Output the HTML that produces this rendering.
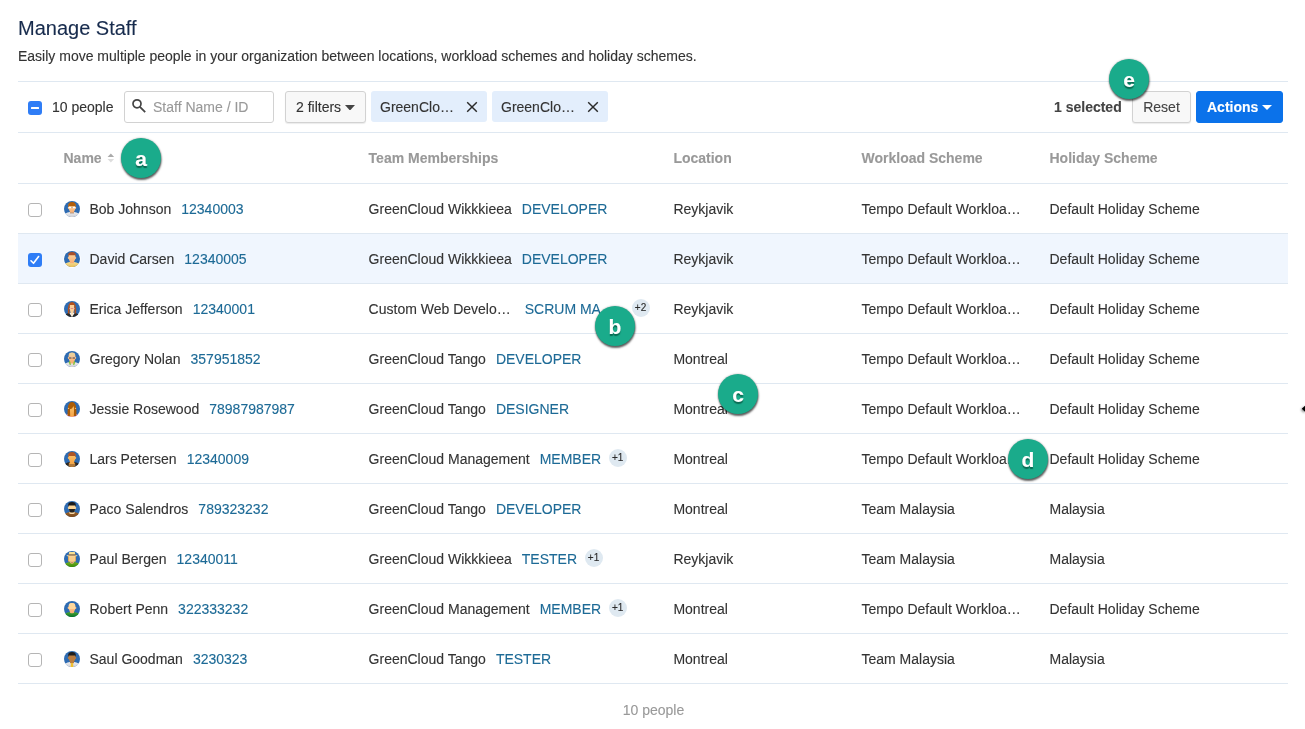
<!DOCTYPE html>
<html><head><meta charset="utf-8">
<style>
*{box-sizing:border-box;margin:0;padding:0}
html,body{width:1305px;height:729px;background:#fff;overflow:hidden}
body{font-family:"Liberation Sans",sans-serif;font-size:14px;color:#333;position:relative;-webkit-text-stroke:0.12px}
.abs{position:absolute;white-space:nowrap;line-height:16px}
h1{position:absolute;left:18px;top:16px;font-size:20px;font-weight:400;color:#172b4d;line-height:24px;white-space:nowrap}
.hr{position:absolute;left:18px;width:1270px;height:1px;background:#dfe8f1}
.row{position:absolute;left:18px;width:1270px;height:49px}
.row.sel{background:#f0f6fe}
.c{position:absolute;top:17px;line-height:16px;white-space:nowrap}
.c1{left:71.5px}.c2{left:350.6px}.c3{left:655.4px}.c4{left:843.5px}.c5{left:1031.5px}
.id{color:#1d6a96;margin-left:10px}
.cb{position:absolute;left:10px;top:19px;width:14px;height:14px;border:1px solid #b5b5b5;border-radius:3px;background:#fff}
.cb.on{border:none;background:#2f7df6}
.cb svg{display:block}
.av{position:absolute;left:46px;top:17px;width:16px;height:16px;overflow:visible}
.th{position:absolute;top:150px;font-weight:700;color:#999;line-height:16px;white-space:nowrap}
.badge{display:inline-block;vertical-align:top;margin-left:7.5px;margin-top:-2px;width:18px;height:18px;border-radius:50%;background:#dfe9f1;color:#2b2b2b;font-size:10px;text-align:center;line-height:18px}
.marker{position:absolute;width:40px;height:40px;border-radius:50%;background:#1aab8b;color:#fff;font-weight:700;font-size:21px;text-align:center;line-height:41px;box-shadow:0.5px 2px 2px rgba(0,0,0,.6),0 0 2px rgba(0,0,0,.35);text-shadow:0 2px 1px rgba(0,70,50,.65)}
.btn{position:absolute;top:91px;height:32px;border:1px solid #d2d2d2;border-radius:3px;background:#f8f8f8;box-shadow:0 1px 1px rgba(0,0,0,.08);line-height:30px;white-space:nowrap;color:#333}
.chip{position:absolute;top:91px;height:31px;border-radius:3px;background:#e3eefc;line-height:33px;white-space:nowrap;color:#333;width:116px;padding-left:9px}
</style></head><body><div id="wrap" style="position:absolute;left:0;top:0;width:1305px;height:729px;will-change:transform">
<svg width="0" height="0" style="position:absolute">
<defs>
<clipPath id="cc"><circle cx="8" cy="8" r="8.3"/></clipPath>
<linearGradient id="gsk" x1="0" y1="0" x2="0" y2="1"><stop offset="0" stop-color="#fdd29a"/><stop offset="1" stop-color="#f7ab72"/></linearGradient>
<linearGradient id="gsk2" x1="0" y1="0" x2="0" y2="1"><stop offset="0" stop-color="#fbc26a"/><stop offset="1" stop-color="#f6a548"/></linearGradient>
<linearGradient id="gwh" x1="0" y1="0" x2="0" y2="1"><stop offset="0" stop-color="#f0f0f2"/><stop offset="1" stop-color="#cfcfd4"/></linearGradient>
<linearGradient id="gye" x1="0" y1="0" x2="0" y2="1"><stop offset="0" stop-color="#f4e09a"/><stop offset="1" stop-color="#e9bd55"/></linearGradient>
<linearGradient id="ggr" x1="0" y1="0" x2="0" y2="1"><stop offset="0" stop-color="#49a435"/><stop offset="1" stop-color="#087326"/></linearGradient>
<linearGradient id="ggr2" x1="0" y1="0" x2="0" y2="1"><stop offset="0" stop-color="#6fb022"/><stop offset="1" stop-color="#3c8a06"/></linearGradient>
<linearGradient id="gbr" x1="0" y1="0" x2="0" y2="1"><stop offset="0" stop-color="#9a6128"/><stop offset="1" stop-color="#7c4a1c"/></linearGradient>
<g id="bg"><circle cx="8" cy="8" r="8.9" fill="#fff" opacity=".85"/><circle cx="8" cy="8" r="8" fill="#2d6bb2"/></g>
<g id="a1"><use href="#bg"/><g clip-path="url(#cc)"><path d="M0.3 13 Q4 11.2 6 11 L8 12 L10 11 Q12 11.2 15.7 13 V16 H0.3 Z" fill="url(#gwh)"/><path d="M4.6 3.6 H11.4 V5.9 Q12.3 5.8 12.2 6.9 Q12.1 8 11.3 8 L10 10.9 V12.2 H6 V10.9 L4.7 8 Q3.9 8 3.8 6.9 Q3.7 5.8 4.6 5.9 Z" fill="url(#gsk)"/><rect x="6" y="11.7" width="4" height="0.6" fill="#888"/><path d="M4.2 6.1 Q3.6 1.1 8 1.1 Q12.4 1.1 11.8 6.1 L11.5 6.1 Q11.5 5.3 10.8 5.3 H5.2 Q4.5 5.3 4.5 6.1 Z" fill="#b25e0a"/><rect x="4.6" y="5.7" width="2.9" height="1.5" rx="0.4" fill="#fff"/><rect x="8.5" y="5.7" width="2.9" height="1.5" rx="0.4" fill="#fff"/><rect x="7.4" y="6" width="1.2" height="0.7" fill="#9a8a70"/></g></g>
<g id="a2"><use href="#bg"/><g clip-path="url(#cc)"><path d="M0.3 13 Q4 11.2 6 11 L8 12 L10 11 Q12 11.2 15.7 13 V16 H0.3 Z" fill="url(#gye)"/><path d="M4.6 3.6 H11.4 V5.9 Q12.3 5.8 12.2 6.9 Q12.1 8 11.3 8 L10 10.9 V12.2 H6 V10.9 L4.7 8 Q3.9 8 3.8 6.9 Q3.7 5.8 4.6 5.9 Z" fill="url(#gsk)"/><path d="M4.2 5.0 Q3.6 1.1 8 1.1 Q12.4 1.1 11.8 5.0 L11.5 5.0 Q11.5 4.2 10.8 4.2 H5.2 Q4.5 4.2 4.5 5.0 Z" fill="#a9512a"/></g></g>
<g id="a3"><use href="#bg"/><g clip-path="url(#cc)"><path d="M0.5 14 Q4 11.6 6 11.4 L8 12 L10 11.4 Q12 11.6 15.5 14 V16 H0.5 Z" fill="#2a2a2a"/><path d="M5.2 11.8 L8 16 L10.8 11.8 Z" fill="#f4f4f4"/><path d="M3.9 12.8 Q3.2 1 8 1.1 Q12.8 1 12.1 12.8 L10.6 12 L10.2 5 H5.8 L5.4 12 Z" fill="#b4521c"/><path d="M6.6 11 L8 16 L9.4 11 Z" fill="#fbe0b8"/><path d="M5.9 4 H10.1 V8.5 L9.5 11.5 H6.5 L5.9 8.5 Z" fill="#fbcf98"/><rect x="5.4" y="7" width="5.2" height="0.9" fill="#eeb0a8"/><rect x="7.2" y="7.1" width="1.6" height="0.6" fill="#d86a50"/></g></g>
<g id="a4"><use href="#bg"/><g clip-path="url(#cc)"><path d="M0.3 13 Q4 11.2 6 11 L8 12 L10 11 Q12 11.2 15.7 13 V16 H0.3 Z" fill="url(#gwh)"/><path d="M4.6 5 Q4.6 1.6 8 1.6 Q11.4 1.6 11.4 5 V5.9 Q12.3 5.8 12.2 6.9 Q12.1 8 11.3 8 L10 10.9 V12.6 H6 V10.9 L4.7 8 Q3.9 8 3.8 6.9 Q3.7 5.8 4.6 5.9 Z" fill="url(#gsk)"/><path d="M5 4.6 Q5 1.7 8 1.7 Q11 1.7 11 4.6 Z" fill="#ead09a"/><rect x="4.8" y="5.8" width="2.8" height="0.7" fill="#c8ccd8"/><rect x="8.4" y="5.8" width="2.8" height="0.7" fill="#c8ccd8"/><rect x="4.9" y="6.4" width="2.6" height="1.1" rx="0.3" fill="#4a4038"/><rect x="8.5" y="6.4" width="2.6" height="1.1" rx="0.3" fill="#4a4038"/><path d="M5.3 10 L6.2 10.6 L7 13.8 L5.8 14 L4.8 11.5 Z" fill="#86c23a"/><path d="M10.7 10 L9.8 10.6 L9 13.8 L10.2 14 L11.2 11.5 Z" fill="#86c23a"/></g></g>
<g id="a5"><use href="#bg"/><g clip-path="url(#cc)"><path d="M0.5 14.5 Q4 12.6 8 12.6 Q12 12.6 15.5 14.5 V16 H0.5 Z" fill="#f3a2d6"/><path d="M3.6 15 Q3 1 8 1.1 Q13 1 12.4 15 Z" fill="#a85a08"/><path d="M6 5.5 L9 4.6 L10 5.5 V9 L9.8 15.8 H6.2 L6 9 Z" fill="url(#gsk2)"/><path d="M4 7.5 Q4 1.8 8 1.8 Q12 1.8 12 7.5 L10.2 8 L9.6 5 L8 7.6 L5.8 8.2 Z" fill="#ad5d06"/><circle cx="4.5" cy="7.4" r="0.7" fill="#f6b868"/><circle cx="11.5" cy="7.4" r="0.7" fill="#f6b868"/></g></g>
<g id="a6"><use href="#bg"/><g clip-path="url(#cc)"><path d="M0.3 13 Q4 11.2 6 11 L8 12 L10 11 Q12 11.2 15.7 13 V16 H0.3 Z" fill="#2a2622"/><path d="M5 11.6 H11 L11.6 16 H4.4 Z" fill="#b07a3c"/><path d="M4.6 3.6 H11.4 V5.9 Q12.3 5.8 12.2 6.9 Q12.1 8 11.3 8 L10 10.9 V12.2 H6 V10.9 L4.7 8 Q3.9 8 3.8 6.9 Q3.7 5.8 4.6 5.9 Z" fill="url(#gsk2)"/><rect x="5.4" y="12" width="5.2" height="0.9" rx="0.4" fill="#f1a94a"/><path d="M4.2 5.8 Q3.6 1.1 8 1.1 Q12.4 1.1 11.8 5.8 L11.5 5.8 Q11.5 5 10.8 5 H5.2 Q4.5 5 4.5 5.8 Z" fill="#ae5524"/></g></g>
<g id="a7"><use href="#bg"/><g clip-path="url(#cc)"><path d="M0.3 13 Q4 11.2 6 11 L8 12 L10 11 Q12 11.2 15.7 13 V16 H0.3 Z" fill="url(#gbr)"/><path d="M5.4 11 H10.6 V12.4 Q8 13.4 5.4 12.4 Z" fill="#fbdcae"/><path d="M4.6 3.6 H11.4 V5.9 Q12.3 5.8 12.2 6.9 Q12.1 8 11.3 8 L10 10.9 V12.2 H6 V10.9 L4.7 8 Q3.9 8 3.8 6.9 Q3.7 5.8 4.6 5.9 Z" fill="#fcd596"/><path d="M4.8 7.9 H11.2 L10.2 11 Q8 12 5.8 11 Z" fill="#222"/><path d="M4.2 5.2 Q3.6 1.1 8 1.1 Q12.4 1.1 11.8 5.2 L11.5 5.2 Q11.5 4.4 10.8 4.4 H5.2 Q4.5 4.4 4.5 5.2 Z" fill="#1b1b1b"/></g></g>
<g id="a8"><use href="#bg"/><g clip-path="url(#cc)"><path d="M0.3 13 Q4 11.2 6 11 L8 12 L10 11 Q12 11.2 15.7 13 V16 H0.3 Z" fill="url(#ggr2)"/><path d="M6.2 10 H9.8 V12 Q8 13.4 6.2 12 Z" fill="#f5b987"/><rect x="7.2" y="11" width="1.6" height="0.8" rx="0.4" fill="#9c6a4a"/><rect x="4" y="4.5" width="8" height="6" fill="#e0a85a"/><rect x="5" y="5" width="6" height="5.5" fill="#f7cd8c"/><path d="M2.4 4.3 H13.6 L12.6 5.2 H3.4 Z" fill="#f1e6b8"/><rect x="4.4" y="3.2" width="7.2" height="1.4" fill="#9a693a"/><path d="M5.2 1 H10.8 L11.2 3.3 H4.8 Z" fill="#f7df92"/></g></g>
<g id="a9"><use href="#bg"/><g clip-path="url(#cc)"><path d="M0.3 13 Q4 11.2 6 11 L8 12 L10 11 Q12 11.2 15.7 13 V16 H0.3 Z" fill="url(#ggr)"/><path d="M4.6 5.2 Q4.6 2 8 2 Q11.4 2 11.4 5.2 V5.9 Q12.5 5.8 12.4 6.9 Q12.3 8 11.3 8 L10 10.9 V11.8 Q8 12.8 6 11.8 V10.9 L4.7 8 Q3.7 8 3.6 6.9 Q3.5 5.8 4.6 5.9 Z" fill="url(#gsk)"/><path d="M4.8 5.4 Q4.8 2.1 8 2.1 Q11.2 2.1 11.2 5.4 V8 H4.8 Z" fill="#fdd79c"/></g></g>
<g id="a10"><use href="#bg"/><g clip-path="url(#cc)"><path d="M0.3 13 Q4 11.2 6 11 L8 12 L10 11 Q12 11.2 15.7 13 V16 H0.3 Z" fill="url(#gwh)"/><path d="M4.6 3.6 H11.4 V5.9 Q12.3 5.8 12.2 6.9 Q12.1 8 11.3 8 L10 10.9 V12.2 H6 V10.9 L4.7 8 Q3.9 8 3.8 6.9 Q3.7 5.8 4.6 5.9 Z" fill="#b97c40"/><path d="M7 11.9 H9 L9.4 16 H6.6 Z" fill="#f1c02e"/><path d="M4.2 5.3999999999999995 Q3.6 1.1 8 1.1 Q12.4 1.1 11.8 5.3999999999999995 L11.5 5.3999999999999995 Q11.5 4.6 10.8 4.6 H5.2 Q4.5 4.6 4.5 5.3999999999999995 Z" fill="#1e1e1e"/></g></g>
</defs></svg>
<h1>Manage Staff</h1>
<div class="abs" style="left:18px;top:48px">Easily move multiple people in your organization between locations, workload schemes and holiday schemes.</div>
<div class="hr" style="top:81px"></div>
<!-- toolbar -->
<div class="cb on" style="left:28px;top:101px"><svg viewBox="0 0 14 14" width="14" height="14"><rect x="3" y="6" width="8" height="2" rx="0.5" fill="#fff"/></svg></div>
<div class="abs" style="left:52px;top:99px">10 people</div>
<div class="btn" style="left:124px;width:150px;background:#fff;box-shadow:none"><svg style="position:absolute;left:6px;top:6px" width="16" height="16" viewBox="0 0 16 16"><circle cx="6" cy="5.8" r="4" fill="none" stroke="#444" stroke-width="1.7"/><path d="M8.9 8.8 L14.2 14.2" stroke="#444" stroke-width="1.8"/></svg><span style="position:absolute;left:28px;color:#999">Staff Name / ID</span></div>
<div class="btn" style="left:285px;width:81px;padding-left:10px;background:#f8f8f8;border-color:#d2d2d2;box-shadow:0 1px 1px rgba(0,0,0,.08)">2 filters<svg style="position:absolute;left:59px;top:13px" width="10" height="5" viewBox="0 0 10 5"><path d="M0 0 H10 L5 5.5 Z" fill="#444"/></svg></div>
<div class="chip" style="left:371px">GreenClo…<svg style="position:absolute;left:95px;top:10px" width="12" height="12" viewBox="0 0 12 12"><path d="M1.2 1.2 L10.8 10.8 M10.8 1.2 L1.2 10.8" stroke="#2a2a2a" stroke-width="1.45"/></svg></div>
<div class="chip" style="left:492px">GreenClo…<svg style="position:absolute;left:95px;top:10px" width="12" height="12" viewBox="0 0 12 12"><path d="M1.2 1.2 L10.8 10.8 M10.8 1.2 L1.2 10.8" stroke="#2a2a2a" stroke-width="1.45"/></svg></div>
<div class="abs" style="left:1054px;top:99px;font-weight:700;color:#444">1 selected</div>
<div class="btn" style="left:1132px;width:59px;text-align:center;color:#444">Reset</div>
<div class="btn" style="left:1196px;width:87px;background:#0b72ea;border-color:#0b72ea;box-shadow:none;color:#fff;font-weight:700;padding-left:10px">Actions<svg style="position:absolute;left:65px;top:13px" width="10" height="5" viewBox="0 0 10 5"><path d="M0 0 H10 L5 5 Z" fill="#fff"/></svg></div>
<div class="hr" style="top:132px"></div>
<!-- header -->
<div class="th" style="left:63.5px">Name</div>
<svg class="abs" style="left:107.3px;top:153px" width="7.7" height="10" viewBox="0 0 7 10" preserveAspectRatio="none"><path d="M0.5 4 L3.5 0.5 L6.5 4 Z" fill="#aaa"/><path d="M0.5 6 L3.5 9.5 L6.5 6 Z" fill="#ddd"/></svg>
<div class="th" style="left:368.6px">Team Memberships</div>
<div class="th" style="left:673.4px">Location</div>
<div class="th" style="left:861.5px">Workload Scheme</div>
<div class="th" style="left:1049.5px">Holiday Scheme</div>
<div class="hr" style="top:183px"></div>
<div class="row" style="top:184px">
<div class="cb"></div>
<svg class="av" viewBox="0 0 16 16"><use href="#a1"/></svg>
<div class="c c1"><span>Bob Johnson</span><span class="id">12340003</span></div>
<div class="c c2"><span>GreenCloud Wikkkieea</span><span class="id">DEVELOPER</span></div>
<div class="c c3">Reykjavik</div><div class="c c4">Tempo Default Workloa…</div><div class="c c5">Default Holiday Scheme</div>
</div>
<div class="hr" style="top:233px"></div>
<div class="row sel" style="top:234px">
<div class="cb on"><svg viewBox="0 0 14 14" width="14" height="14"><path d="M3 7.8 L5.5 10.3 L10.6 3.5" fill="none" stroke="#fff" stroke-width="1.6" stroke-linecap="round" stroke-linejoin="round"/></svg></div>
<svg class="av" viewBox="0 0 16 16"><use href="#a2"/></svg>
<div class="c c1"><span>David Carsen</span><span class="id">12340005</span></div>
<div class="c c2"><span>GreenCloud Wikkkieea</span><span class="id">DEVELOPER</span></div>
<div class="c c3">Reykjavik</div><div class="c c4">Tempo Default Workloa…</div><div class="c c5">Default Holiday Scheme</div>
</div>
<div class="hr" style="top:283px"></div>
<div class="row" style="top:284px">
<div class="cb"></div>
<svg class="av" viewBox="0 0 16 16"><use href="#a3"/></svg>
<div class="c c1"><span>Erica Jefferson</span><span class="id">12340001</span></div>
<div class="c c2"><span>Custom Web Develo…</span><span class="id" style="margin-left:14px">SCRUM MA…</span><span class="badge" style="margin-left:16.6px">+2</span></div>
<div class="c c3">Reykjavik</div><div class="c c4">Tempo Default Workloa…</div><div class="c c5">Default Holiday Scheme</div>
</div>
<div class="hr" style="top:333px"></div>
<div class="row" style="top:334px">
<div class="cb"></div>
<svg class="av" viewBox="0 0 16 16"><use href="#a4"/></svg>
<div class="c c1"><span>Gregory Nolan</span><span class="id">357951852</span></div>
<div class="c c2"><span>GreenCloud Tango</span><span class="id">DEVELOPER</span></div>
<div class="c c3">Montreal</div><div class="c c4">Tempo Default Workloa…</div><div class="c c5">Default Holiday Scheme</div>
</div>
<div class="hr" style="top:383px"></div>
<div class="row" style="top:384px">
<div class="cb"></div>
<svg class="av" viewBox="0 0 16 16"><use href="#a5"/></svg>
<div class="c c1"><span>Jessie Rosewood</span><span class="id">78987987987</span></div>
<div class="c c2"><span>GreenCloud Tango</span><span class="id">DESIGNER</span></div>
<div class="c c3">Montreal</div><div class="c c4">Tempo Default Workloa…</div><div class="c c5">Default Holiday Scheme</div>
</div>
<div class="hr" style="top:433px"></div>
<div class="row" style="top:434px">
<div class="cb"></div>
<svg class="av" viewBox="0 0 16 16"><use href="#a6"/></svg>
<div class="c c1"><span>Lars Petersen</span><span class="id">12340009</span></div>
<div class="c c2"><span>GreenCloud Management</span><span class="id">MEMBER</span><span class="badge">+1</span></div>
<div class="c c3">Montreal</div><div class="c c4">Tempo Default Workloa…</div><div class="c c5">Default Holiday Scheme</div>
</div>
<div class="hr" style="top:483px"></div>
<div class="row" style="top:484px">
<div class="cb"></div>
<svg class="av" viewBox="0 0 16 16"><use href="#a7"/></svg>
<div class="c c1"><span>Paco Salendros</span><span class="id">789323232</span></div>
<div class="c c2"><span>GreenCloud Tango</span><span class="id">DEVELOPER</span></div>
<div class="c c3">Montreal</div><div class="c c4">Team Malaysia</div><div class="c c5">Malaysia</div>
</div>
<div class="hr" style="top:533px"></div>
<div class="row" style="top:534px">
<div class="cb"></div>
<svg class="av" viewBox="0 0 16 16"><use href="#a8"/></svg>
<div class="c c1"><span>Paul Bergen</span><span class="id">12340011</span></div>
<div class="c c2"><span>GreenCloud Wikkkieea</span><span class="id">TESTER</span><span class="badge">+1</span></div>
<div class="c c3">Reykjavik</div><div class="c c4">Team Malaysia</div><div class="c c5">Malaysia</div>
</div>
<div class="hr" style="top:583px"></div>
<div class="row" style="top:584px">
<div class="cb"></div>
<svg class="av" viewBox="0 0 16 16"><use href="#a9"/></svg>
<div class="c c1"><span>Robert Penn</span><span class="id">322333232</span></div>
<div class="c c2"><span>GreenCloud Management</span><span class="id">MEMBER</span><span class="badge">+1</span></div>
<div class="c c3">Montreal</div><div class="c c4">Tempo Default Workloa…</div><div class="c c5">Default Holiday Scheme</div>
</div>
<div class="hr" style="top:633px"></div>
<div class="row" style="top:634px">
<div class="cb"></div>
<svg class="av" viewBox="0 0 16 16"><use href="#a10"/></svg>
<div class="c c1"><span>Saul Goodman</span><span class="id">3230323</span></div>
<div class="c c2"><span>GreenCloud Tango</span><span class="id">TESTER</span></div>
<div class="c c3">Montreal</div><div class="c c4">Team Malaysia</div><div class="c c5">Malaysia</div>
</div>
<div class="hr" style="top:683px"></div>
<div class="abs" style="left:1px;width:1305px;text-align:center;top:702px;color:#999">10 people</div>
<!-- cursor artifact -->
<svg class="abs" style="left:1299px;top:402px;overflow:visible;filter:drop-shadow(-0.5px 1.6px 1px rgba(0,0,0,.5))" width="6" height="12" viewBox="0 0 6 12"><path d="M6.5 3.2 L2.8 6.7 L6.5 10.2 Z" fill="#000"/></svg>
<!-- markers -->
<div class="marker" style="left:121px;top:138px">a</div>
<div class="marker" style="left:595px;top:306px">b</div>
<div class="marker" style="left:718px;top:374px">c</div>
<div class="marker" style="left:1008px;top:439px">d</div>
<div class="marker" style="left:1109px;top:59px">e</div>
</div></body></html>
